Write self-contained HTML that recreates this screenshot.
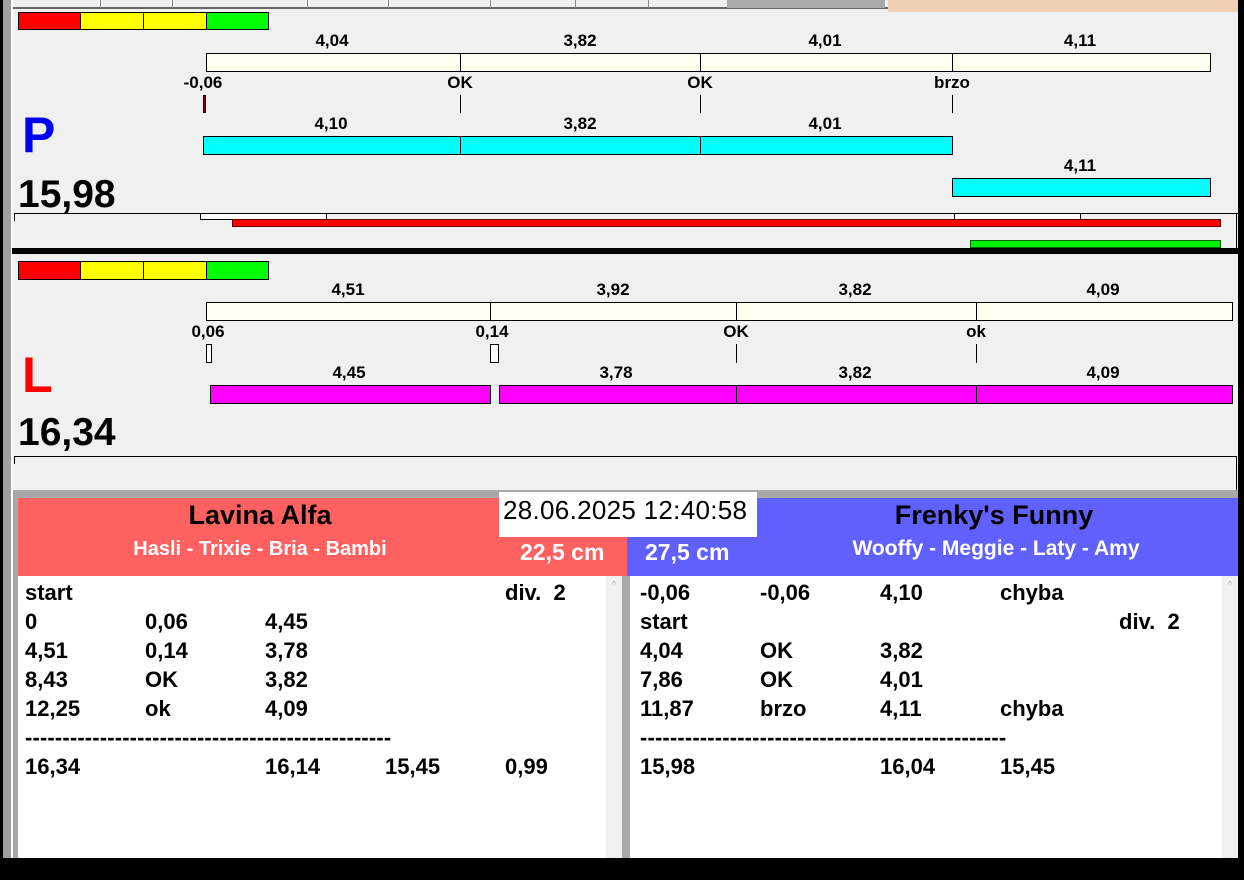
<!DOCTYPE html>
<html><head><meta charset="utf-8"><style>
*{margin:0;padding:0;box-sizing:border-box}
body{width:1244px;height:880px;overflow:hidden;background:#f0f0f0;position:relative;font-family:"Liberation Sans",Arial,sans-serif}
div{position:absolute}
.t{font-weight:bold;font-size:17px;color:#000;transform:translateX(-50%);white-space:nowrap;line-height:17px}
.cr{background:#fffff0;border:1px solid #000}
.cy{background:#00ffff;border:1px solid #000}
.mg{background:#ff00ff;border:1px solid #000}
.vl{width:1px;background:#000}
.r{font-weight:bold;font-size:22px;line-height:24px;white-space:nowrap}
</style></head><body>
<div style="left:0;top:0;width:3px;height:880px;background:#000"></div>
<div style="left:3px;top:0;width:8px;height:880px;background:#a0a0a0"></div>
<div style="left:11px;top:0;width:2px;height:880px;background:#fff"></div>
<div style="left:1238px;top:0;width:6px;height:880px;background:#000"></div>
<div style="left:13px;top:0;width:875px;height:9px;background:#f0f0f0;border-bottom:2px solid #666"></div>
<div style="left:727px;top:0;width:158px;height:8px;background:#a8a8a8"></div>
<div style="left:100px;top:0;width:1px;height:8px;background:#888"></div>
<div style="left:172px;top:0;width:1px;height:8px;background:#888"></div>
<div style="left:307px;top:0;width:1px;height:8px;background:#888"></div>
<div style="left:388px;top:0;width:1px;height:8px;background:#888"></div>
<div style="left:490px;top:0;width:1px;height:8px;background:#888"></div>
<div style="left:575px;top:0;width:1px;height:8px;background:#888"></div>
<div style="left:648px;top:0;width:1px;height:8px;background:#888"></div>
<div style="left:888px;top:0;width:350px;height:12px;background:#f0d0b4"></div>

<div style="left:18px;top:12px;width:63px;height:18px;background:#f00;border:1px solid #000"></div>
<div style="left:80px;top:12px;width:64px;height:18px;background:#ff0;border:1px solid #000"></div>
<div style="left:143px;top:12px;width:64px;height:18px;background:#ff0;border:1px solid #000"></div>
<div style="left:206px;top:12px;width:63px;height:18px;background:#0f0;border:1px solid #000"></div>

<div class="t" style="left:332px;top:32px">4,04</div>
<div class="t" style="left:580px;top:32px">3,82</div>
<div class="t" style="left:825px;top:32px">4,01</div>
<div class="t" style="left:1080px;top:32px">4,11</div>
<div class="cr" style="left:206px;top:53px;width:1005px;height:19px"></div>
<div class="vl" style="left:460px;top:53px;height:19px"></div>
<div class="vl" style="left:700px;top:53px;height:19px"></div>
<div class="vl" style="left:952px;top:53px;height:19px"></div>
<div class="t" style="left:203px;top:74px">-0,06</div>
<div class="t" style="left:460px;top:74px">OK</div>
<div class="t" style="left:700px;top:74px">OK</div>
<div class="t" style="left:952px;top:74px">brzo</div>
<div style="left:203px;top:95px;width:3px;height:18px;background:#800;border:1px solid #300"></div>
<div class="vl" style="left:460px;top:95px;height:18px"></div>
<div class="vl" style="left:700px;top:95px;height:18px"></div>
<div class="vl" style="left:952px;top:95px;height:18px"></div>
<div style="left:22px;top:105px;font-size:50px;font-weight:bold;color:#0000ee;line-height:60px">P</div>
<div class="t" style="left:331px;top:115px">4,10</div>
<div class="t" style="left:580px;top:115px">3,82</div>
<div class="t" style="left:825px;top:115px">4,01</div>
<div class="cy" style="left:203px;top:136px;width:750px;height:19px"></div>
<div class="vl" style="left:460px;top:136px;height:19px"></div>
<div class="vl" style="left:700px;top:136px;height:19px"></div>
<div class="t" style="left:1080px;top:157px">4,11</div>
<div class="cy" style="left:952px;top:178px;width:259px;height:19px"></div>
<div style="left:18px;top:172px;font-size:39px;font-weight:bold;line-height:46px;height:41px;overflow:hidden">15,98</div>
<div style="left:14px;top:213px;width:1224px;height:1px;background:#000"></div>
<div style="left:14px;top:213px;width:1px;height:8px;background:#000"></div>
<div style="left:200px;top:213px;width:127px;height:7px;background:#fff;border:1px solid #000"></div>
<div style="left:954px;top:213px;width:127px;height:7px;background:#fff;border:1px solid #000"></div>
<div style="left:232px;top:219px;width:989px;height:8px;background:#f00;border:1px solid #600"></div>
<div style="left:970px;top:240px;width:251px;height:8px;background:#0e0;border:1px solid #060"></div>
<div style="left:1236px;top:213px;width:1px;height:35px;background:#000"></div>
<div style="left:12px;top:248px;width:1226px;height:6px;background:#000"></div>

<div style="left:18px;top:261px;width:63px;height:19px;background:#f00;border:1px solid #000"></div>
<div style="left:80px;top:261px;width:64px;height:19px;background:#ff0;border:1px solid #000"></div>
<div style="left:143px;top:261px;width:64px;height:19px;background:#ff0;border:1px solid #000"></div>
<div style="left:206px;top:261px;width:63px;height:19px;background:#0f0;border:1px solid #000"></div>
<div class="t" style="left:348px;top:281px">4,51</div>
<div class="t" style="left:613px;top:281px">3,92</div>
<div class="t" style="left:855px;top:281px">3,82</div>
<div class="t" style="left:1103px;top:281px">4,09</div>
<div class="cr" style="left:206px;top:302px;width:1027px;height:19px"></div>
<div class="vl" style="left:490px;top:302px;height:19px"></div>
<div class="vl" style="left:736px;top:302px;height:19px"></div>
<div class="vl" style="left:976px;top:302px;height:19px"></div>
<div class="t" style="left:208px;top:323px">0,06</div>
<div class="t" style="left:492px;top:323px">0,14</div>
<div class="t" style="left:736px;top:323px">OK</div>
<div class="t" style="left:976px;top:323px">ok</div>
<div style="left:206px;top:344px;width:6px;height:19px;background:#fff;border:1px solid #000"></div>
<div style="left:490px;top:344px;width:9px;height:19px;background:#fff;border:1px solid #000"></div>
<div class="vl" style="left:736px;top:344px;height:19px"></div>
<div class="vl" style="left:976px;top:344px;height:19px"></div>
<div style="left:22px;top:345px;font-size:50px;font-weight:bold;color:#f00;line-height:60px">L</div>
<div class="t" style="left:349px;top:364px">4,45</div>
<div class="t" style="left:616px;top:364px">3,78</div>
<div class="t" style="left:855px;top:364px">3,82</div>
<div class="t" style="left:1103px;top:364px">4,09</div>
<div class="mg" style="left:210px;top:385px;width:281px;height:19px"></div>
<div class="mg" style="left:499px;top:385px;width:734px;height:19px"></div>
<div class="vl" style="left:736px;top:385px;height:19px"></div>
<div class="vl" style="left:976px;top:385px;height:19px"></div>
<div style="left:18px;top:410px;font-size:39px;font-weight:bold;line-height:46px">16,34</div>
<div style="left:14px;top:456px;width:1223px;height:1px;background:#000"></div>
<div style="left:14px;top:456px;width:1px;height:8px;background:#000"></div>
<div style="left:1236px;top:456px;width:1px;height:34px;background:#000"></div>
<div style="left:13px;top:490px;width:1225px;height:8px;background:#a8a8a8"></div>

<div style="left:13px;top:498px;width:5px;height:360px;background:#a8a8a8"></div>
<div style="left:18px;top:498px;width:610px;height:78px;background:#ff6060"></div>
<div style="left:627px;top:498px;width:611px;height:78px;background:#6060ff"></div>
<div style="left:499px;top:492px;width:258px;height:45px;background:#fff"></div>
<div style="left:503px;top:495px;font-size:26px;line-height:30px;white-space:nowrap;letter-spacing:0.3px">28.06.2025 12:40:58</div>
<div class="t" style="left:260px;top:501px;font-size:27px;line-height:28px">Lavina Alfa</div>
<div class="t" style="left:260px;top:538px;font-size:20px;line-height:22px;color:#fff">Hasli - Trixie - Bria - Bambi</div>
<div style="left:520px;top:539px;font-size:23px;font-weight:bold;color:#fff;line-height:26px">22,5 cm</div>
<div style="left:645px;top:539px;font-size:23px;font-weight:bold;color:#fff;line-height:26px">27,5 cm</div>
<div class="t" style="left:994px;top:501px;font-size:27px;line-height:28px">Frenky's Funny</div>
<div class="t" style="left:996px;top:538px;font-size:21px;line-height:22px;color:#fff">Wooffy - Meggie - Laty - Amy</div>

<div style="left:18px;top:576px;width:588px;height:282px;background:#fff"></div>
<div style="left:606px;top:576px;width:16px;height:282px;background:#f0f0f0;color:#bbb;font-size:10px;text-align:center;padding-top:4px">^</div>
<div style="left:622px;top:576px;width:8px;height:282px;background:#a8a8a8"></div>
<div style="left:630px;top:576px;width:592px;height:282px;background:#fff"></div>
<div style="left:1222px;top:576px;width:16px;height:282px;background:#f0f0f0;color:#bbb;font-size:10px;text-align:center;padding-top:4px">^</div>
<div style="left:0;top:858px;width:1244px;height:22px;background:#000"></div>

<div class="r" style="left:25px;top:581px">start</div><div class="r" style="left:505px;top:581px">div.&nbsp; 2</div>
<div class="r" style="left:25px;top:610px">0</div><div class="r" style="left:145px;top:610px">0,06</div><div class="r" style="left:265px;top:610px">4,45</div>
<div class="r" style="left:25px;top:639px">4,51</div><div class="r" style="left:145px;top:639px">0,14</div><div class="r" style="left:265px;top:639px">3,78</div>
<div class="r" style="left:25px;top:668px">8,43</div><div class="r" style="left:145px;top:668px">OK</div><div class="r" style="left:265px;top:668px">3,82</div>
<div class="r" style="left:25px;top:697px">12,25</div><div class="r" style="left:145px;top:697px">ok</div><div class="r" style="left:265px;top:697px">4,09</div>
<div class="r" style="left:25px;top:726px;font-size:22px;letter-spacing:0.15px">-------------------------------------------------</div>
<div class="r" style="left:25px;top:755px">16,34</div><div class="r" style="left:265px;top:755px">16,14</div><div class="r" style="left:385px;top:755px">15,45</div><div class="r" style="left:505px;top:755px">0,99</div>

<div class="r" style="left:640px;top:581px">-0,06</div><div class="r" style="left:760px;top:581px">-0,06</div><div class="r" style="left:880px;top:581px">4,10</div><div class="r" style="left:1000px;top:581px">chyba</div>
<div class="r" style="left:640px;top:610px">start</div><div class="r" style="left:1119px;top:610px">div.&nbsp; 2</div>
<div class="r" style="left:640px;top:639px">4,04</div><div class="r" style="left:760px;top:639px">OK</div><div class="r" style="left:880px;top:639px">3,82</div>
<div class="r" style="left:640px;top:668px">7,86</div><div class="r" style="left:760px;top:668px">OK</div><div class="r" style="left:880px;top:668px">4,01</div>
<div class="r" style="left:640px;top:697px">11,87</div><div class="r" style="left:760px;top:697px">brzo</div><div class="r" style="left:880px;top:697px">4,11</div><div class="r" style="left:1000px;top:697px">chyba</div>
<div class="r" style="left:640px;top:726px;font-size:22px;letter-spacing:0.15px">-------------------------------------------------</div>
<div class="r" style="left:640px;top:755px">15,98</div><div class="r" style="left:880px;top:755px">16,04</div><div class="r" style="left:1000px;top:755px">15,45</div>
</body></html>
